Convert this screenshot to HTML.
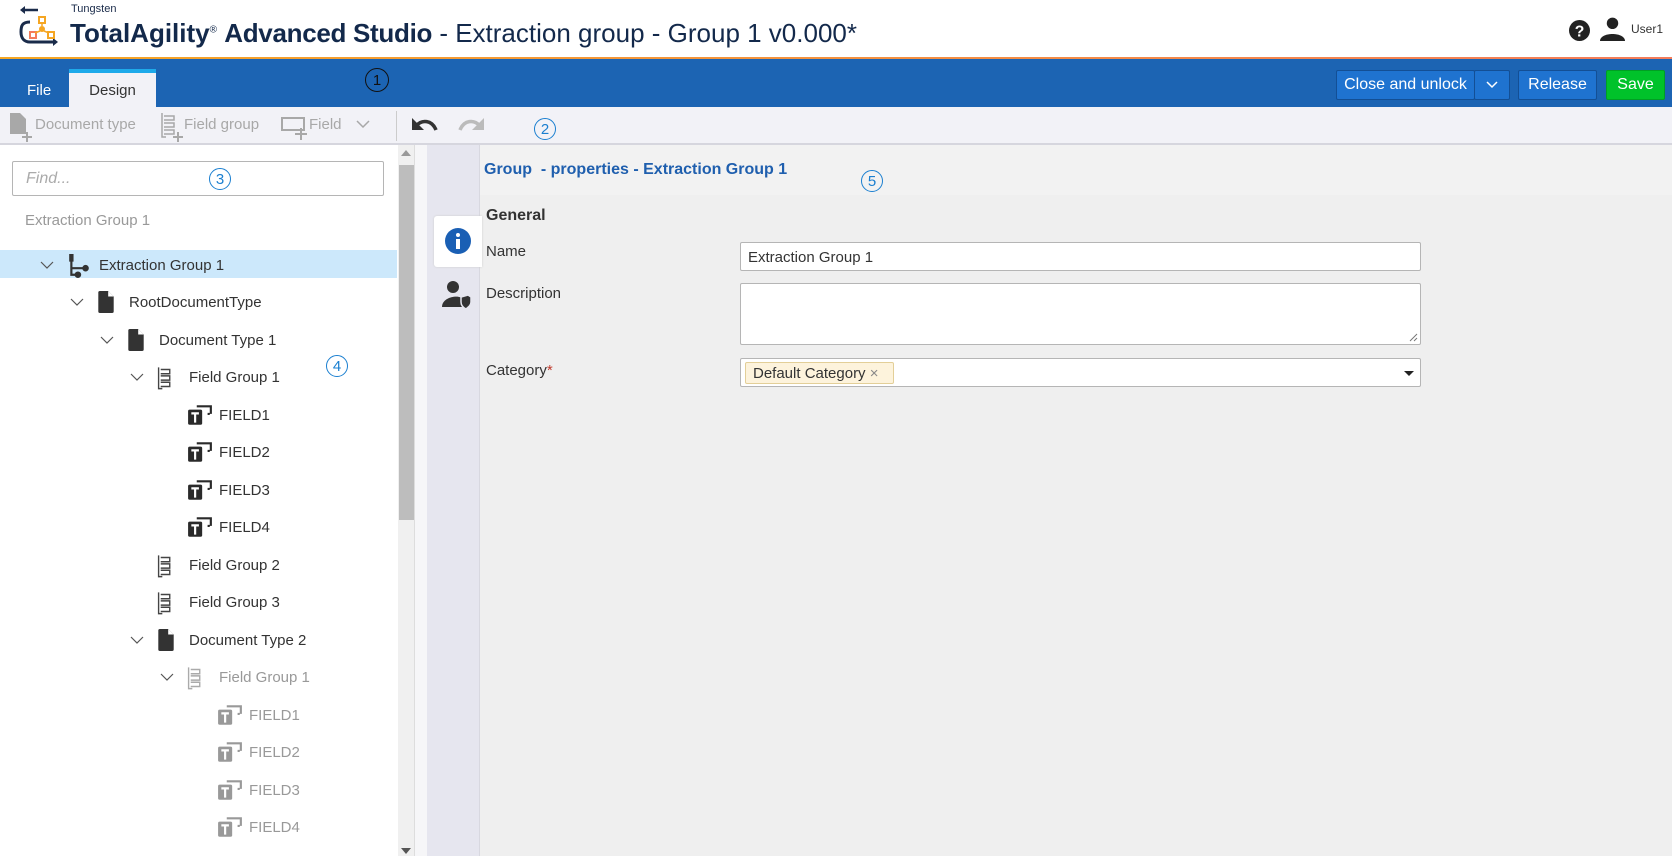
<!DOCTYPE html>
<html><head><meta charset="utf-8">
<style>
*{box-sizing:border-box;margin:0;padding:0}
body{width:1672px;height:856px;overflow:hidden;background:#fff;font-family:"Liberation Sans",Arial,sans-serif;position:relative;color:#333}
.a{position:absolute}
.hdr{left:0;top:0;width:1672px;height:58px;background:#fff}
.orange{left:0;top:57px;width:1672px;height:2px;background:linear-gradient(90deg,#f5a623,#f47c5a)}
.bar{left:0;top:59px;width:1672px;height:48px;background:#1c64b3}
.tb{left:0;top:107px;width:1672px;height:38px;background:#f2f2f7;border-bottom:2px solid #d6d6de}
.btn{background:#1f73d0;border:1px solid #134f95;color:#fff;font-size:16px;display:flex;align-items:center;justify-content:center;border-radius:2px}
.tbt{font-size:15px;color:#a8a8a8;top:116px}
.row{left:0;height:29px;width:397px;font-size:15px;display:flex;align-items:center}
.lbl{font-size:15px;color:#333}
.inp{background:#fff;border:1px solid #b5b5b5;border-radius:2px}
.circ{border-radius:50%;width:22px;height:22px;border:1.5px solid #1a7fd0;color:#1a7fd0;font-size:15px;display:flex;align-items:center;justify-content:center}
</style></head><body>
<div class="a hdr"></div>
<svg class="a" style="left:18px;top:4px" width="44" height="44" viewBox="0 0 44 44">
<path d="M6 6 L20 6" stroke="#1a2b4a" stroke-width="2.5" fill="none"/>
<path d="M2 6 L7 2 L7 10 Z" fill="#1a2b4a"/>
<path d="M12 18 C4 18 3 22 3 28 C3 34 6 38 12 38 L36 38" stroke="#1a2b4a" stroke-width="3" fill="none"/>
<path d="M40 38 L35 34 L35 42 Z" fill="#1a2b4a"/>
<rect x="21" y="13" width="6" height="6" fill="none" stroke="#f5a623" stroke-width="2"/>
<circle cx="24" cy="25" r="3" fill="#f5a623"/>
<rect x="12" y="28" width="6" height="6" fill="none" stroke="#f47c5a" stroke-width="2"/>
<rect x="30" y="28" width="6" height="6" fill="none" stroke="#f5a623" stroke-width="2"/>
<path d="M24 19 V22 M22 27 L17 29 M26 27 L31 29" stroke="#f5a623" stroke-width="1.5"/>
</svg>
<div class="a" style="left:71px;top:3px;font-size:11px;color:#1a2b4a">Tungsten</div>
<div class="a" style="left:70px;top:18px;font-size:26px;color:#13294b;white-space:nowrap"><b>TotalAgility</b><sup style="font-size:10px">®</sup> <span style="font-weight:600;letter-spacing:-0.3px">Advanced Studio</span> <span style="font-weight:400"> - Extraction group - Group 1 v0.000*</span></div>
<svg class="a" style="left:1569px;top:20px" width="21" height="21" viewBox="0 0 20 20"><circle cx="10" cy="10" r="10" fill="#222"/><text x="10" y="15.5" text-anchor="middle" fill="#fff" font-size="15" font-weight="bold" font-family="Liberation Sans">?</text></svg>
<svg class="a" style="left:1600px;top:16px" width="25" height="25" viewBox="0 0 24 24"><circle cx="12" cy="7" r="5.5" fill="#222"/><path d="M0 24 C0 15 24 15 24 24 Z" fill="#222"/></svg>
<div class="a" style="left:1631px;top:22px;font-size:12px;color:#333">User1</div>
<div class="a orange"></div>
<div class="a bar"></div>
<div class="a" style="left:27px;top:82px;font-size:15px;color:#fff">File</div>
<div class="a" style="left:69px;top:69px;width:87px;height:38px;background:#f2f2f7;border-top:4px solid #1eaaea;font-size:15px;color:#333;text-align:center;padding-top:9px">Design</div>
<div class="a" style="left:365px;top:68px;width:24px;height:24px;border-radius:50%;border:1.5px solid #111;font-size:15px;color:#111;display:flex;align-items:center;justify-content:center">1</div>
<div class="a btn" style="left:1336px;top:70px;width:139px;height:30px">Close and unlock</div>
<div class="a btn" style="left:1474px;top:70px;width:36px;height:30px"><svg width="12" height="8" viewBox="0 0 12 8"><path d="M1 1 L6 6 L11 1" stroke="#fff" stroke-width="1.5" fill="none"/></svg></div>
<div class="a btn" style="left:1518px;top:70px;width:79px;height:30px">Release</div>
<div class="a btn" style="left:1606px;top:70px;width:59px;height:30px;background:#00c22a;border-color:#00a023">Save</div>
<div class="a tb"></div>
<svg class="a" style="left:9px;top:112px" width="24" height="30" viewBox="0 0 24 30"><path d="M1 1 H11 L17 7 V22 H1 Z" fill="#a8a8a8"/><path d="M18 20 V30 M13 25 H23" stroke="#a8a8a8" stroke-width="2"/></svg>
<div class="a tbt" style="left:35px">Document type</div>
<svg class="a" style="left:160px;top:112px" width="24" height="30" viewBox="0 0 24 30"><path d="M2 1 V25 H6 M4 4 H14 V8 H4 M4 11 H14 V15 H4 M4 18 H14 V22 H4" stroke="#a8a8a8" stroke-width="1.5" fill="none"/><path d="M18 20 V30 M13 25 H23" stroke="#a8a8a8" stroke-width="2"/></svg>
<div class="a tbt" style="left:184px">Field group</div>
<svg class="a" style="left:281px;top:114px" width="28" height="26" viewBox="0 0 28 26"><rect x="1" y="4" width="22" height="12" fill="none" stroke="#a8a8a8" stroke-width="2"/><path d="M20 14 V26 M14 20 H26" stroke="#a8a8a8" stroke-width="2"/></svg>
<div class="a tbt" style="left:309px">Field</div>
<svg class="a" style="left:356px;top:120px" width="14" height="9" viewBox="0 0 14 9"><path d="M1 1 L7 7 L13 1" stroke="#a8a8a8" stroke-width="1.5" fill="none"/></svg>
<div class="a" style="left:396px;top:111px;width:1px;height:30px;background:#ccc"></div>
<svg class="a" style="left:410px;top:116px" width="28" height="18" viewBox="0 0 28 18"><path d="M6 10 C12 3 22 4 26 14" stroke="#333" stroke-width="3.5" fill="none"/><path d="M2 2 L2 14 L14 14 Z" fill="#333"/></svg>
<svg class="a" style="left:458px;top:116px" width="28" height="18" viewBox="0 0 28 18"><path d="M22 10 C16 3 6 4 2 14" stroke="#bbb" stroke-width="3.5" fill="none"/><path d="M26 2 L26 14 L14 14 Z" fill="#bbb"/></svg>
<div class="a circ" style="left:534px;top:118px">2</div>

<div class="a" style="left:398px;top:145px;width:16px;height:711px;background:#f0f0f0"></div>
<div class="a" style="left:399px;top:165px;width:16px;height:355px;background:#bdbdbd"></div>
<div class="a" style="left:401px;top:150px;width:0;height:0;border-left:5px solid transparent;border-right:5px solid transparent;border-bottom:6px solid #999"></div>
<div class="a" style="left:401px;top:848px;width:0;height:0;border-left:5px solid transparent;border-right:5px solid transparent;border-top:6px solid #555"></div>
<div class="a" style="left:414px;top:145px;width:13px;height:711px;background:#f6f6f8;border-left:1px solid #ddd"></div>
<div class="a inp" style="left:12px;top:161px;width:372px;height:35px"></div>
<div class="a" style="left:26px;top:170px;font-size:16px;color:#aaa;font-style:italic">Find...</div>
<div class="a circ" style="left:209px;top:168px">3</div>
<div class="a" style="left:25px;top:212px;font-size:15px;color:#999">Extraction Group 1</div>

<div class="a row" style="top:250px;height:28px;background:#cce8fb"></div>
<div class="a circ" style="left:326px;top:355px">4</div>
<div id="tree"></div>

<div class="a" style="left:427px;top:145px;width:1245px;height:711px;background:#efefef"></div>
<div class="a" style="left:427px;top:145px;width:53px;height:711px;background:#e6e6ef;border-right:1px solid #d8d8e0"></div>
<div class="a" style="left:480px;top:145px;width:1192px;height:50px;background:#f2f2f2"></div>
<div class="a" style="left:484px;top:161px;font-size:16px;font-weight:bold;color:#1f5fae">Group&nbsp; - properties - Extraction Group 1</div>
<div class="a circ" style="left:861px;top:170px">5</div>
<div class="a" style="left:434px;top:216px;width:48px;height:51px;background:#fff;border-radius:3px 0 0 3px;box-shadow:0 0 2px #ccc"></div>
<svg class="a" style="left:444px;top:227px" width="28" height="28" viewBox="0 0 28 28"><circle cx="14" cy="14" r="13" fill="#1a5fb4"/><circle cx="14" cy="8" r="2" fill="#fff"/><rect x="12" y="12" width="4" height="10" fill="#fff"/></svg>
<svg class="a" style="left:442px;top:280px" width="30" height="30" viewBox="0 0 30 30"><circle cx="11" cy="7" r="6" fill="#333"/><path d="M0 27 C0 16 20 14 21 20 V27 Z" fill="#333"/><path d="M19 17 L26 15 L29 17 V22 C29 26 25 28 24 29 C22 28 19 26 19 22 Z" fill="#333" stroke="#e6e6ef" stroke-width="1.5"/></svg>
<div class="a" style="left:486px;top:207px;font-size:16px;font-weight:bold;color:#333">General</div>
<div class="a lbl" style="left:486px;top:243px">Name</div>
<div class="a inp" style="left:740px;top:242px;width:681px;height:29px"></div>
<div class="a lbl" style="left:748px;top:249px">Extraction Group 1</div>
<div class="a lbl" style="left:486px;top:285px">Description</div>
<div class="a inp" style="left:740px;top:283px;width:681px;height:62px"></div>
<svg class="a" style="left:1409px;top:333px" width="9" height="9" viewBox="0 0 9 9"><path d="M8 1 L1 8 M8 5 L5 8" stroke="#777"/></svg>
<div class="a lbl" style="left:486px;top:362px">Category<span style="color:#c0392b">*</span></div>
<div class="a inp" style="left:740px;top:358px;width:681px;height:29px"></div>
<div class="a" style="left:745px;top:362px;width:149px;height:22px;background:#fdf3dc;border:1px solid #e3cf98;border-radius:2px;font-size:15px;color:#333;padding:2px 0 0 7px">Default Category <span style="color:#888">×</span></div>
<div class="a" style="left:1404px;top:371px;width:0;height:0;border-left:5px solid transparent;border-right:5px solid transparent;border-top:5px solid #222"></div>

<script>
var svgDoc='<svg width="18" height="22" viewBox="0 0 16 20"><path d="M1 1.5 Q1 0 2.5 0 H10 L15 5 V18.5 Q15 20 13.5 20 H2.5 Q1 20 1 18.5 Z" fill="#333"/><path d="M10 0 V5 H15" fill="#fff"/></svg>';
function fg(c){return '<svg width="17" height="24" viewBox="0 0 16 22"><path d="M1.5 1 V21 H5 M3.5 3 H12 V7 H3.5 M3.5 9 H12 V13 H3.5 M3.5 15 H12 V19 H3.5" stroke="'+c+'" stroke-width="1.3" fill="none"/></svg>';}
function fld(c){return '<svg width="26" height="22" viewBox="0 0 24 20"><path d="M9 2 H22 V9 M21 9 H19" stroke="'+c+'" stroke-width="2" fill="none"/><rect x="1" y="5" width="13" height="14" rx="1.5" fill="'+c+'"/><path d="M4 8.5 H11 M7.5 8.5 V17" stroke="#fff" stroke-width="2"/></svg>';}
var grp='<svg width="24" height="24" viewBox="0 0 22 22"><rect x="2" y="0" width="4" height="7" fill="#333"/><path d="M4 6 V13 H16 M4 13 V19 H10" stroke="#333" stroke-width="2" fill="none"/><circle cx="17" cy="13" r="3" fill="#333"/><circle cx="10" cy="19" r="3" fill="#333"/></svg>';
var rows=[
[0,1,grp,'Extraction Group 1','#333'],
[1,1,svgDoc,'RootDocumentType','#333'],
[2,1,svgDoc,'Document Type 1','#333'],
[3,1,fg('#444'),'Field Group 1','#333'],
[4,0,fld('#2a2a2a'),'FIELD1','#333'],
[4,0,fld('#2a2a2a'),'FIELD2','#333'],
[4,0,fld('#2a2a2a'),'FIELD3','#333'],
[4,0,fld('#2a2a2a'),'FIELD4','#333'],
[3,0,fg('#444'),'Field Group 2','#333'],
[3,0,fg('#444'),'Field Group 3','#333'],
[3,1,svgDoc,'Document Type 2','#333'],
[4,1,fg('#aaa'),'Field Group 1','#999'],
[5,0,fld('#999'),'FIELD1','#999'],
[5,0,fld('#999'),'FIELD2','#999'],
[5,0,fld('#999'),'FIELD3','#999'],
[5,0,fld('#999'),'FIELD4','#999']];
var h='';
rows.forEach(function(r,i){
 var y=265.5+i*37.5-10; var x=46+r[0]*30;
 if(r[1]) h+='<svg class="a" style="left:'+(x-6)+'px;top:'+(y+5)+'px" width="14" height="9" viewBox="0 0 14 9"><path d="M1 1 L7 7 L13 1" stroke="#555" stroke-width="1.2" fill="none"/></svg>';
 h+='<div class="a" style="left:'+(x+21)+'px;top:'+(y-2)+'px">'+r[2]+'</div>';
 h+='<div class="a" style="left:'+(x+53)+'px;top:'+(y+1)+'px;font-size:15px;color:'+r[4]+'">'+r[3]+'</div>';
});
document.getElementById('tree').innerHTML=h;
</script>
</body></html>
